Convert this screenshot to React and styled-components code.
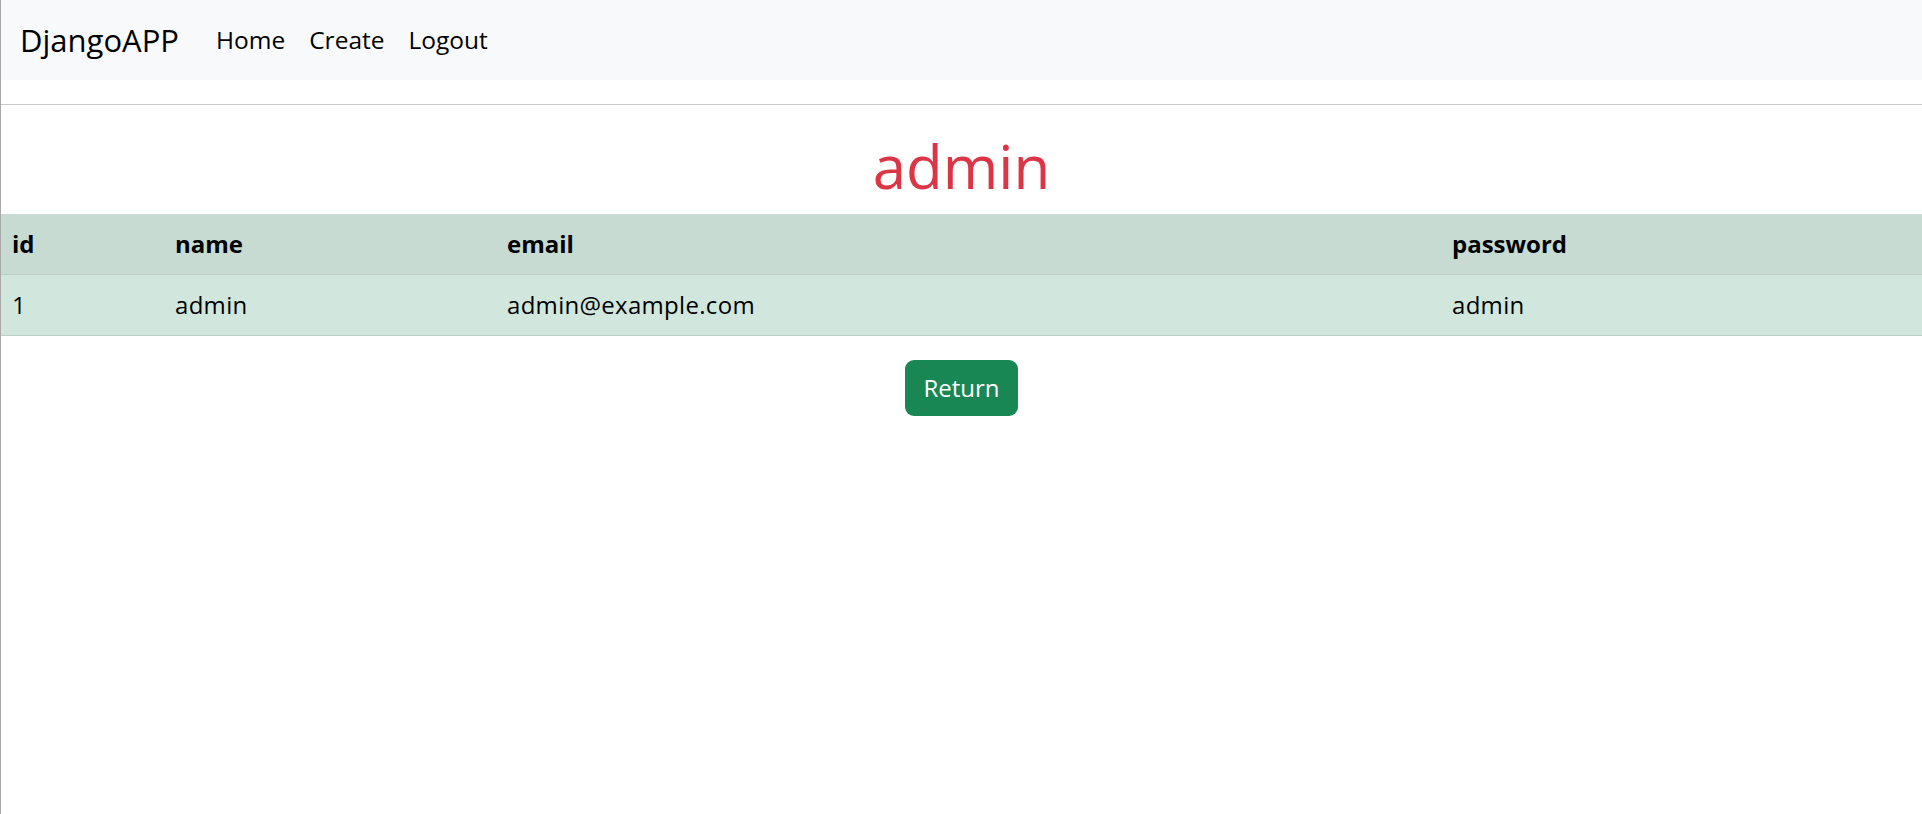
import React from 'react'
import styled, { createGlobalStyle } from 'styled-components'

const GlobalStyle = createGlobalStyle`
  html, body {
    margin: 0;
    padding: 0;
    background: #ffffff;
  }
  body {
    font-family: "Open Sans", "Noto Sans", "Liberation Sans", sans-serif;
    font-size: 24px;
    line-height: 1.5;
    color: #212529;
  }
`

const users = [{ id: 1, name: 'admin', email: 'admin@example.com', password: 'admin' }]

const columns = [
  { key: 'id', width: 163 },
  { key: 'name', width: 332 },
  { key: 'email', width: 945 },
  { key: 'password', width: 'auto' },
]

function App() {
  return (
    <Page>
      <GlobalStyle />
      <Navbar>
        <Brand href="#">DjangoAPP</Brand>
        <NavLinks>
          <NavLink href="#">Home</NavLink>
          <NavLink href="#">Create</NavLink>
          <NavLink href="#">Logout</NavLink>
        </NavLinks>
      </Navbar>
      <Rule />
      <Title>admin</Title>
      <Table>
        <colgroup>
          {columns.map((c) => (
            <col key={c.key} style={{ width: c.width }} />
          ))}
        </colgroup>
        <thead>
          <tr>
            {columns.map((c) => (
              <HeadCell key={c.key}>{c.key}</HeadCell>
            ))}
          </tr>
        </thead>
        <tbody>
          {users.map((u) => (
            <tr key={u.id}>
              <Cell>{u.id}</Cell>
              <Cell>{u.name}</Cell>
              <Cell>{u.email}</Cell>
              <Cell>{u.password}</Cell>
            </tr>
          ))}
        </tbody>
      </Table>
      <Actions>
        <Button>Return</Button>
      </Actions>
    </Page>
  )
}

const Page = styled.div`
  min-height: 100vh;
  border-left: 1px solid #a8a8a8;
  box-sizing: border-box;
`

const Navbar = styled.nav`
  display: flex;
  align-items: center;
  height: 80px;
  padding: 0 19px;
  background-color: #f8f9fa;
`

const Brand = styled.a`
  font-size: 31px;
  color: #000000;
  text-decoration: none;
  margin-right: 37px;
`

const NavLinks = styled.div`
  display: flex;
  gap: 24px;
`

const NavLink = styled.a`
  font-size: 24.5px;
  color: #000000;
  text-decoration: none;
`

const Rule = styled.hr`
  margin: 24px 0 0 0;
  border: none;
  border-top: 1px solid #c8c8c8;
`

const Title = styled.h1`
  margin: 25px 0 12px;
  font-size: 60px;
  font-weight: 400;
  line-height: 1.2;
  color: #dc3545;
  text-align: center;
`

const Table = styled.table`
  width: 100%;
  border-collapse: collapse;
  table-layout: fixed;
`

const HeadCell = styled.th`
  text-align: left;
  font-weight: 700;
  padding: 12px 11px;
  background-color: #c7dbd2;
  border-bottom: 1px solid #bcd0c7;
  color: #000000;
`

const Cell = styled.td`
  padding: 12px 11px;
  background-color: #d1e7dd;
  border-bottom: 1px solid #bcd0c7;
  color: #000000;
  letter-spacing: 0.3px;
`

const Actions = styled.div`
  display: flex;
  justify-content: center;
  padding-top: 24px;
`

const Button = styled.button`
  font-family: inherit;
  font-size: 24px;
  line-height: 1.5;
  height: 56px;
  padding: 0 18px;
  color: #ffffff;
  background-color: #198754;
  border: none;
  border-radius: 9px;
  cursor: pointer;
`

export default App
